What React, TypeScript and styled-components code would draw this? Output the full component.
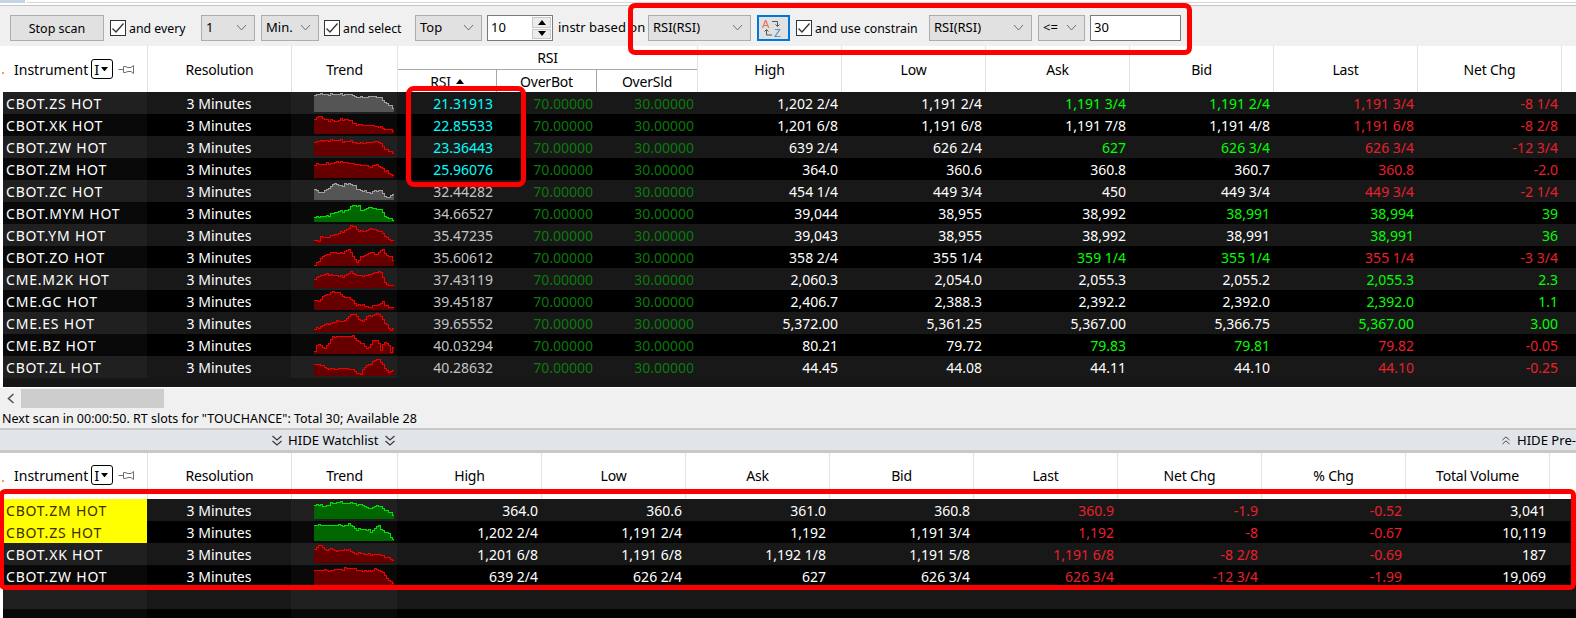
import React from "react";
import styled, { createGlobalStyle } from "styled-components";

const Global = createGlobalStyle`
  html, body { margin: 0; padding: 0; background: #fff; }
  body { font-family: "Noto Sans", "Open Sans", sans-serif; }
`;

const FONT = `"Noto Sans", "Open Sans", sans-serif`;

const Page = styled.div`
  position: relative;
  width: 1576px;
  height: 618px;
  overflow: hidden;
  background: #fff;
  font-family: ${FONT};
  font-size: 13.5px;
  color: #000;
`;

const TopStrip = styled.div`
  height: 5px;
  display: flex;
  gap: 2px;
  background: #fff;
  border-bottom: 1px solid #c6c6c6;
  box-sizing: content-box;
`;
const TopTab = styled.div`
  width: 25px;
  height: 3px;
  background: #c4d4e6;
`;
const TopField = styled.div`
  flex: 1;
  height: 3px;
  background: #fdfdfd;
  border-bottom: 1px solid #d8d8d8;
  box-sizing: border-box;
`;

const Toolbar = styled.div`
  height: 40px;
  background: #f0f0f0;
  display: flex;
  align-items: flex-start;
  padding: 9px 0 0 10px;
  box-sizing: border-box;
`;

const StopButton = styled.div`
  width: 94px;
  height: 26px;
  box-sizing: border-box;
  background: #e1e1e1;
  border: 1px solid #adadad;
  display: flex;
  align-items: center;
  justify-content: center;
  font-size: 12.5px;
  margin-right: 6px;
`;

const CheckWrap = styled.div<{ $w: number; $ml?: number }>`
  width: ${(p) => p.$w}px;
  margin-left: ${(p) => p.$ml ?? 0}px;
  height: 26px;
  display: flex;
  align-items: center;
  gap: 3px;
  font-size: 12.3px;
  white-space: nowrap;
  flex: none;
`;
const CheckBox = styled.div`
  width: 16px;
  height: 16px;
  box-sizing: border-box;
  border: 1px solid #333;
  background: #fff;
  flex: none;
  display: flex;
  align-items: center;
  justify-content: center;
`;

const SelectBox = styled.div<{ $w: number; $ml: number }>`
  width: ${(p) => p.$w}px;
  margin-left: ${(p) => p.$ml}px;
  height: 26px;
  box-sizing: border-box;
  flex: none;
  background: #e1e1e1;
  border: 1px solid #adadad;
  display: flex;
  align-items: center;
  justify-content: space-between;
  padding: 0 7px 2px 4px;
  font-size: 13px;
`;

const TextBox = styled.div<{ $w: number; $ml: number }>`
  width: ${(p) => p.$w}px;
  margin-left: ${(p) => p.$ml}px;
  height: 26px;
  box-sizing: border-box;
  flex: none;
  background: #fff;
  border: 1px solid #7a7a7a;
  display: flex;
  align-items: center;
  justify-content: space-between;
  padding: 0 1px 2px 3px;
  font-size: 13px;
`;

const SpinColumn = styled.div`
  width: 19px;
  height: 22px;
  margin-top: 2px;
  display: flex;
  flex-direction: column;
  gap: 1px;
`;
const SpinButton = styled.div`
  flex: 1;
  background: #ececec;
  border: 1px solid #c8c8c8;
  display: flex;
  align-items: center;
  justify-content: center;
`;

const ToolLabel = styled.div<{ $ml: number; $w: number }>`
  margin-left: ${(p) => p.$ml}px;
  width: ${(p) => p.$w}px;
  height: 24px;
  display: flex;
  align-items: center;
  font-size: 13px;
  white-space: nowrap;
  flex: none;
`;

const SortButton = styled.div`
  width: 33px;
  height: 26px;
  margin: 0 6px;
  box-sizing: border-box;
  border: 2px solid #0078d7;
  background: #e1e1e1;
  flex: none;
  display: flex;
  align-items: center;
  justify-content: center;
`;

const HeaderRow = styled.div<{ $h: number }>`
  height: ${(p) => p.$h}px;
  display: flex;
  background: #fff;
  padding-left: 5px;
`;
const HeaderCell = styled.div<{ $w: number }>`
  width: ${(p) => p.$w}px;
  flex: none;
  box-sizing: border-box;
  border-right: 1px solid #e2e2e2;
  display: flex;
  align-items: center;
  justify-content: center;
  font-size: 14px;
  letter-spacing: -0.2px;
  white-space: nowrap;
`;
const InstrumentHead = styled(HeaderCell)`
  justify-content: flex-start;
  padding-left: 9px;
  gap: 3px;
  letter-spacing: 0;
`;
const DropChip = styled.div`
  width: 22px;
  height: 20px;
  box-sizing: border-box;
  border: 1px solid #000;
  border-radius: 3px;
  display: flex;
  align-items: center;
  padding-left: 2px;
  gap: 2px;
  font-size: 15px;
`;
const PinSlot = styled.div`
  margin-left: 2px;
  display: flex;
`;
const GroupHead = styled.div`
  width: 300px;
  flex: none;
  display: flex;
  flex-direction: column;
  border-right: 1px solid #e2e2e2;
  box-sizing: border-box;
`;
const GroupTitle = styled.div`
  height: 23px;
  display: flex;
  align-items: center;
  justify-content: center;
  font-size: 14px;
  letter-spacing: -0.2px;
  border-bottom: 1px solid #a8a8a8;
`;
const GroupSubs = styled.div`
  flex: 1;
  display: flex;
`;
const SubCell = styled.div<{ $w: number; $last?: boolean }>`
  width: ${(p) => p.$w}px;
  flex: none;
  box-sizing: border-box;
  border-right: ${(p) => (p.$last ? "none" : "1px solid #a8a8a8")};
  display: flex;
  align-items: center;
  justify-content: center;
  gap: 5px;
  font-size: 14px;
  letter-spacing: -0.2px;
`;

const Rows = styled.div`
  margin-left: 3px;
`;
const Row = styled.div<{ $odd: boolean }>`
  height: 22px;
  display: flex;
  background: ${(p) => (p.$odd ? "#181818" : "#000")};
`;
const Cell = styled.div<{ $w: number; $align: string; $color: string; $tint?: boolean; $bg?: string }>`
  width: ${(p) => p.$w}px;
  flex: none;
  box-sizing: border-box;
  display: flex;
  align-items: center;
  justify-content: ${(p) => p.$align};
  padding: 0 3px;
  font-size: 14px;
  white-space: nowrap;
  color: ${(p) => p.$color};
  background: ${(p) => p.$bg ?? (p.$tint ? "rgba(255,255,255,0.035)" : "transparent")};
`;
const SymbolCell = styled(Cell)`
  letter-spacing: 0.8px;
`;
const TrendCell = styled.div`
  width: 106px;
  flex: none;
  box-sizing: border-box;
  padding: 0 3px 2px 23px;
  display: flex;
  align-items: flex-end;
  background: rgba(255, 255, 255, 0.035);
`;
const TableTail = styled.div`
  height: 9px;
  margin-left: 3px;
  background: #161616;
  border-bottom: 1px solid #fff;
`;
const ScrollRow = styled.div`
  height: 20px;
  background: #f0f0f0;
  display: flex;
  align-items: center;
`;
const ScrollArrow = styled.div`
  width: 21px;
  display: flex;
  justify-content: center;
`;
const ScrollThumb = styled.div`
  width: 143px;
  height: 19px;
  background: #cdcdcd;
`;
const StatusBar = styled.div`
  height: 20px;
  background: #f0f0f0;
  display: flex;
  align-items: center;
  padding-left: 2px;
  font-size: 12.5px;
  white-space: nowrap;
`;
const HideBar = styled.div`
  height: 20px;
  box-sizing: content-box;
  background: #e1e5e9;
  border-top: 2px solid #c8c8c8;
  border-bottom: 3px solid #c8c8c8;
  display: flex;
  align-items: center;
  padding-left: 272px;
  font-size: 13.1px;
  white-space: nowrap;
  overflow: hidden;
  justify-content: space-between;
`;
const HideGroup = styled.div`
  display: flex;
  align-items: center;
  gap: 6px;
`;
const HidePreGroup = styled(HideGroup)`
  width: 74px;
  gap: 7px;
`;
const WatchGap = styled.div`
  height: 2px;
  display: flex;
  padding-left: 5px;
`;
const GapCell = styled.div<{ $w: number }>`
  width: ${(p) => p.$w}px;
  flex: none;
  box-sizing: border-box;
  border-right: 1px solid #e2e2e2;
`;

const Frame = styled.div<{ $l: number; $t: number; $w: number; $h: number; $r: number }>`
  position: absolute;
  left: ${(p) => p.$l}px;
  top: ${(p) => p.$t}px;
  width: ${(p) => p.$w}px;
  height: ${(p) => p.$h}px;
  box-sizing: border-box;
  border: 5px solid #fe0000;
  border-radius: ${(p) => p.$r}px;
  pointer-events: none;
`;

const Tick = styled.div<{ $t: number }>`
  position: absolute;
  left: 2px;
  top: ${(p) => p.$t}px;
  width: 2px;
  height: 2px;
  background: #f4a040;
`;

const Chevron = ({ color = "#707070" }: { color?: string }) => (
  <svg width="11" height="7" viewBox="0 0 11 7">
    <polyline points="1,1 5.5,6 10,1" fill="none" stroke={color} strokeWidth="1" />
  </svg>
);
const Check = () => (
  <svg width="14" height="14" viewBox="0 0 14 14">
    <polyline points="1.5,7.5 5,11 12.5,2.5" fill="none" stroke="#333" strokeWidth="1.3" />
  </svg>
);
const Tri = ({ up, s = 8 }: { up?: boolean; s?: number }) => (
  <svg width={s} height={s / 2 + 1} viewBox="0 0 8 5">
    <polygon points={up ? "0,5 8,5 4,0" : "0,0 8,0 4,5"} fill="#000" />
  </svg>
);
const Pin = () => (
  <svg width="17" height="13" viewBox="0 0 17 13">
    <path d="M0.5 6.5H5M5.5 3.5H7L10 4.5H13L15.5 2.5V10.5L13 8.5H10L7 9.5H5.5V3.5" fill="none" stroke="#707070" strokeWidth="1" />
  </svg>
);
const Double = ({ up }: { up?: boolean }) => (
  <svg width="10" height="11" viewBox="0 0 10 11">
    <polyline points={up ? "0.5,5 5,1 9.5,5" : "0.5,1 5,5 9.5,1"} fill="none" stroke="#333" strokeWidth="1.1" />
    <polyline points={up ? "0.5,10 5,6 9.5,10" : "0.5,6 5,10 9.5,6"} fill="none" stroke="#333" strokeWidth="1.1" />
  </svg>
);
const SortIcon = () => (
  <svg width="25" height="20" viewBox="0 0 25 20">
    <text x="1" y="10" fontSize="11" fill="#d9705f" fontFamily="Liberation Sans, sans-serif">A</text>
    <text x="13" y="19" fontSize="11" fill="#4f86c6" fontFamily="Liberation Sans, sans-serif">Z</text>
    <path d="M11 3.5H16.5V8M14.5 6.5L16.5 8.5L18.5 6.5" fill="none" stroke="#555" strokeWidth="1" />
    <path d="M11 17H5.5V12M3.5 13.5L5.5 11.5L7.5 13.5" fill="none" stroke="#555" strokeWidth="1" />
  </svg>
);

type Tone = "r" | "g" | "x";
const TONES: Record<Tone, { fill: string; line: string }> = {
  r: { fill: "#660000", line: "#ee0000" },
  g: { fill: "#006600", line: "#00e000" },
  x: { fill: "#555555", line: "#a0a0a0" },
};

const Spark = ({ tone, knots }: { tone: Tone; knots: number[] }) => {
  const heights: number[] = [];
  const pts: [number, number][] = [];
  for (let i = 0; i < knots.length; i += 2) pts.push([knots[i], knots[i + 1]]);
  for (let x = 0; x <= 80; x += 2) {
    let j = 0;
    while (j < pts.length - 2 && pts[j + 1][0] < x) j++;
    const [x0, h0] = pts[j];
    const [x1, h1] = pts[j + 1];
    const t = Math.min(1, Math.max(0, (x - x0) / (x1 - x0 || 1)));
    const jitter = ((x * 7 + knots.length * 3) % 5 === 0 ? 1 : 0) - ((x * 11) % 7 === 0 ? 1 : 0);
    heights.push(Math.max(0, Math.round(h0 + (h1 - h0) * t) + jitter));
  }
  let area = "M0 20";
  let line = "";
  heights.forEach((h, i) => {
    const x = i * 2;
    const y = 20 - h;
    area += `L${x} ${y}L${x + 2} ${y}`;
    line += `${i === 0 ? "M" : "L"}${x} ${y - 0.5}L${x + 2} ${y - 0.5}`;
  });
  area += "L82 20Z";
  const c = TONES[tone];
  return (
    <svg width="80" height="20" viewBox="0 0 80 20" shapeRendering="crispEdges">
      <path d={area} fill={c.fill} />
      <path d={line} fill="none" stroke={c.line} strokeWidth="1" />
    </svg>
  );
};

const W = "#ffffff";
const G = "#00ff00";
const R = "#e8202c";

type Price = [string, string];
const ScanData: { sym: string; rsi: string; cy?: boolean; tone: Tone; knots: number[]; p: Price[] }[] = [
  { sym: "CBOT.ZS HOT", rsi: "21.31913", cy: true, tone: "x", knots: [0,17,33,17,46,14,60,15,66,13,73,7,78,3,80,1],
    p: [["1,202 2/4",W],["1,191 2/4",W],["1,191 3/4",G],["1,191 2/4",G],["1,191 3/4",R],["-8 1/4",R]] },
  { sym: "CBOT.XK HOT", rsi: "22.85533", cy: true, tone: "r", knots: [0,15,5,17,10,14,16,13,21,12,26,14,33,14,38,10,46,8,56,8,66,6,73,4,80,1],
    p: [["1,201 6/8",W],["1,191 6/8",W],["1,191 7/8",W],["1,191 4/8",W],["1,191 6/8",R],["-8 2/8",R]] },
  { sym: "CBOT.ZW HOT", rsi: "23.36443", cy: true, tone: "r", knots: [0,14,19,15,33,14,46,12,63,14,69,8,73,5,80,1],
    p: [["639 2/4",W],["626 2/4",W],["627",G],["626 3/4",G],["626 3/4",R],["-12 3/4",R]] },
  { sym: "CBOT.ZM HOT", rsi: "25.96076", cy: true, tone: "r", knots: [0,13,6,13,16,14,28,16,33,14,43,13,53,11,63,12,69,8,74,4,80,1],
    p: [["364.0",W],["360.6",W],["360.8",W],["360.7",W],["360.8",R],["-2.0",R]] },
  { sym: "CBOT.ZC HOT", rsi: "32.44282", tone: "x", knots: [0,10,4,7,9,7,13,11,18,15,28,14,34,16,41,12,48,8,54,7,66,9,71,2,74,2,78,5,80,1],
    p: [["454 1/4",W],["449 3/4",W],["450",W],["449 3/4",W],["449 3/4",R],["-2 1/4",R]] },
  { sym: "CBOT.MYM HOT", rsi: "34.66527", tone: "g", knots: [0,5,6,4,16,7,24,10,33,11,38,16,44,16,46,10,54,14,66,11,73,3,78,1,80,3],
    p: [["39,044",W],["38,955",W],["38,992",W],["38,991",G],["38,994",G],["39",G]] },
  { sym: "CBOT.YM HOT", rsi: "35.47235", tone: "r", knots: [0,4,4,2,6,6,11,6,16,7,21,9,26,11,31,13,36,17,41,17,44,12,51,12,56,15,63,13,69,9,74,4,76,2,80,3],
    p: [["39,043",W],["38,955",W],["38,992",W],["38,991",W],["38,991",G],["36",G]] },
  { sym: "CBOT.ZO HOT", rsi: "35.60612", tone: "r", knots: [0,1,4,4,9,10,14,12,19,13,24,12,29,13,34,16,39,7,43,3,46,8,53,11,57,14,61,10,68,16,73,9,76,8,80,1],
    p: [["358 2/4",W],["355 1/4",W],["359 1/4",G],["355 1/4",G],["355 1/4",R],["-3 3/4",R]] },
  { sym: "CME.M2K HOT", rsi: "37.43119", tone: "r", knots: [0,9,5,11,13,14,16,12,28,11,36,15,41,13,46,11,55,13,65,16,71,4,75,1,80,3],
    p: [["2,060.3",W],["2,054.0",W],["2,055.3",W],["2,055.2",W],["2,055.3",G],["2.3",G]] },
  { sym: "CME.GC HOT", rsi: "39.45187", tone: "r", knots: [0,10,4,8,9,13,16,17,24,17,29,12,34,12,41,5,48,4,54,2,61,4,68,7,74,2,80,1],
    p: [["2,406.7",W],["2,388.3",W],["2,392.2",W],["2,392.0",W],["2,392.0",G],["1.1",G]] },
  { sym: "CME.ES HOT", rsi: "39.65552", tone: "r", knots: [0,3,4,3,9,7,16,8,23,10,31,11,36,17,40,17,44,12,48,10,54,16,64,17,68,12,73,4,76,1,80,5],
    p: [["5,372.00",W],["5,361.25",W],["5,367.00",W],["5,366.75",W],["5,367.00",G],["3.00",G]] },
  { sym: "CME.BZ HOT", rsi: "40.03294", tone: "r", knots: [0,3,3,10,6,8,9,3,13,10,18,16,23,17,38,17,44,12,49,8,53,4,57,12,63,13,66,3,70,12,74,8,76,1,79,7,80,1],
    p: [["80.21",W],["79.72",W],["79.83",G],["79.81",G],["79.82",R],["-0.05",R]] },
  { sym: "CBOT.ZL HOT", rsi: "40.28632", tone: "r", knots: [0,12,6,10,13,7,19,6,28,7,36,6,41,3,46,1,51,10,58,13,63,17,69,9,74,3,80,5],
    p: [["44.45",W],["44.08",W],["44.11",W],["44.10",W],["44.10",R],["-0.25",R]] },
];

const WatchData: { sym: string; yellow?: boolean; tone: Tone; knots: number[]; p: Price[] }[] = [
  { sym: "CBOT.ZM HOT", yellow: true, tone: "g", knots: [0,14,5,13,10,12,17,15,27,16,32,15,40,15,47,13,55,10,63,13,72,8,77,4,80,1],
    p: [["364.0",W],["360.6",W],["361.0",W],["360.8",W],["360.9",R],["-1.9",R],["-0.52",R],["3,041",W]] },
  { sym: "CBOT.ZS HOT", yellow: true, tone: "g", knots: [0,16,3,15,30,15,35,16,42,11,48,11,57,9,63,15,67,10,73,7,78,1,80,2],
    p: [["1,202 2/4",W],["1,191 2/4",W],["1,192",W],["1,191 3/4",W],["1,192",R],["-8",R],["-0.67",R],["10,119",W]] },
  { sym: "CBOT.XK HOT", tone: "r", knots: [0,14,6,17,11,12,16,14,23,11,28,13,33,12,40,9,57,8,67,7,75,4,80,1],
    p: [["1,201 6/8",W],["1,191 6/8",W],["1,192 1/8",W],["1,191 5/8",W],["1,191 6/8",R],["-8 2/8",R],["-0.69",R],["187",W]] },
  { sym: "CBOT.ZW HOT", tone: "r", knots: [0,14,20,14,23,15,36,16,50,13,62,15,68,12,73,5,78,1,80,0],
    p: [["639 2/4",W],["626 2/4",W],["627",W],["626 3/4",W],["626 3/4",R],["-12 3/4",R],["-1.99",R],["19,069",W]] },
];

const InstrumentHeader = () => (
  <InstrumentHead $w={143}>
    Instrument
    <DropChip>I<Tri s={7} /></DropChip>
    <PinSlot><Pin /></PinSlot>
  </InstrumentHead>
);

const EmptyRow = ({ odd }: { odd: boolean }) => (
  <Row $odd={odd}>
    <Cell $w={144} $align="flex-start" $color="#fff" $tint />
    <Cell $w={144} $align="center" $color="#fff" />
    <Cell $w={106} $align="center" $color="#fff" $tint />
  </Row>
);

export default function App() {
  return (
    <Page>
      <Global />
      <TopStrip>
        <TopTab />
        <TopField />
      </TopStrip>
      <Toolbar>
        <StopButton>Stop scan</StopButton>
        <CheckWrap $w={91}><CheckBox><Check /></CheckBox>and every</CheckWrap>
        <SelectBox $w={54} $ml={0}>1<Chevron /></SelectBox>
        <SelectBox $w={58} $ml={6}>Min.<Chevron /></SelectBox>
        <CheckWrap $w={91} $ml={5}><CheckBox><Check /></CheckBox>and select</CheckWrap>
        <SelectBox $w={67} $ml={0}>Top<Chevron /></SelectBox>
        <TextBox $w={66} $ml={5}>
          10
          <SpinColumn>
            <SpinButton><Tri up /></SpinButton>
            <SpinButton><Tri /></SpinButton>
          </SpinColumn>
        </TextBox>
        <ToolLabel $ml={5} $w={90}>instr based on</ToolLabel>
        <SelectBox $w={103} $ml={0}>RSI(RSI)<Chevron /></SelectBox>
        <SortButton><SortIcon /></SortButton>
        <CheckWrap $w={133}><CheckBox><Check /></CheckBox>and use constrain</CheckWrap>
        <SelectBox $w={103} $ml={0}>RSI(RSI)<Chevron /></SelectBox>
        <SelectBox $w={47} $ml={6}>&lt;=<Chevron /></SelectBox>
        <TextBox $w={91} $ml={5}>30</TextBox>
      </Toolbar>

      <HeaderRow $h={46}>
        <InstrumentHeader />
        <HeaderCell $w={144}>Resolution</HeaderCell>
        <HeaderCell $w={106}>Trend</HeaderCell>
        <GroupHead>
          <GroupTitle>RSI</GroupTitle>
          <GroupSubs>
            <SubCell $w={99}>RSI <Tri up /></SubCell>
            <SubCell $w={100}>OverBot</SubCell>
            <SubCell $w={100} $last>OverSld</SubCell>
          </GroupSubs>
        </GroupHead>
        {["High", "Low", "Ask", "Bid", "Last", "Net Chg"].map((t) => (
          <HeaderCell key={t} $w={144}>{t}</HeaderCell>
        ))}
      </HeaderRow>

      <Rows>
        {ScanData.map((r, i) => (
          <Row key={r.sym} $odd={i % 2 === 0}>
            <SymbolCell $w={144} $align="flex-start" $color="#fff" $tint>{r.sym}</SymbolCell>
            <Cell $w={144} $align="center" $color="#fff">3 Minutes</Cell>
            <TrendCell><Spark tone={r.tone} knots={r.knots} /></TrendCell>
            <Cell $w={99} $align="flex-end" $color={r.cy ? "#00ffff" : "#c4c4c4"}>{r.rsi}</Cell>
            <Cell $w={100} $align="flex-end" $color="#0a7a0a">70.00000</Cell>
            <Cell $w={101} $align="flex-end" $color="#0a7a0a">30.00000</Cell>
            {r.p.map(([v, c], k) => (
              <Cell key={k} $w={144} $align="flex-end" $color={c}>{v}</Cell>
            ))}
          </Row>
        ))}
      </Rows>
      <TableTail />
      <ScrollRow>
        <ScrollArrow>
          <svg width="8" height="11" viewBox="0 0 8 11">
            <polyline points="6.5,1 1.5,5.5 6.5,10" fill="none" stroke="#555" strokeWidth="1.6" />
          </svg>
        </ScrollArrow>
        <ScrollThumb />
      </ScrollRow>
      <StatusBar>Next scan in 00:00:50. RT slots for "TOUCHANCE": Total 30; Available 28</StatusBar>
      <HideBar>
        <HideGroup><Double />HIDE Watchlist<Double /></HideGroup>
        <HidePreGroup><Double up />HIDE Pre-</HidePreGroup>
      </HideBar>

      <HeaderRow $h={44}>
        <InstrumentHeader />
        <HeaderCell $w={144}>Resolution</HeaderCell>
        <HeaderCell $w={106}>Trend</HeaderCell>
        {["High", "Low", "Ask", "Bid", "Last", "Net Chg", "% Chg", "Total Volume"].map((t) => (
          <HeaderCell key={t} $w={144}>{t}</HeaderCell>
        ))}
      </HeaderRow>
      <WatchGap>
        <GapCell $w={143} />
        <GapCell $w={144} />
        <GapCell $w={106} />
        {Array.from({ length: 8 }, (_, i) => <GapCell key={i} $w={144} />)}
      </WatchGap>
      <Rows>
        {WatchData.map((r, i) => (
          <Row key={r.sym} $odd={i % 2 === 0}>
            <SymbolCell $w={144} $align="flex-start" $color={r.yellow ? "#3c2e00" : "#fff"} $bg={r.yellow ? "#ffff00" : undefined} $tint>{r.sym}</SymbolCell>
            <Cell $w={144} $align="center" $color="#fff">3 Minutes</Cell>
            <TrendCell><Spark tone={r.tone} knots={r.knots} /></TrendCell>
            {r.p.map(([v, c], k) => (
              <Cell key={k} $w={144} $align="flex-end" $color={c}>{v}</Cell>
            ))}
          </Row>
        ))}
        <EmptyRow odd />
        <EmptyRow odd={false} />
      </Rows>

      <Tick $t={72} />
      <Tick $t={480} />
      <Frame $l={628} $t={3} $w={564} $h={52} $r={7} />
      <Frame $l={406} $t={86} $w={120} $h={101} $r={8} />
      <Frame $l={-1} $t={489} $w={1577} $h={101} $r={6} />
    </Page>
  );
}
